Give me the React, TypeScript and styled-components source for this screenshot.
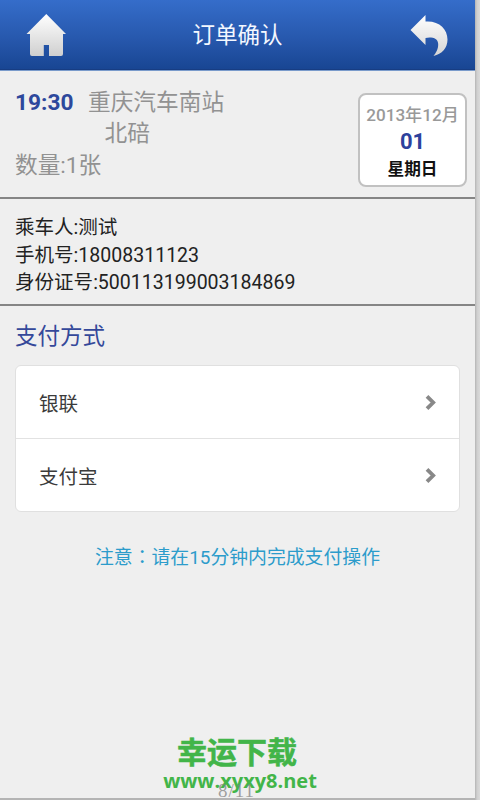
import React from "react";
import styled, { createGlobalStyle } from "styled-components";

const GlobalStyle = createGlobalStyle`
  * { box-sizing: border-box; }
  body { margin: 0; background: #d2d2d2; overflow: hidden; }
`;

const Backdrop = styled.div`
  position: relative;
  width: 480px;
  height: 800px;
  overflow: hidden;
  background: linear-gradient(90deg, #b4b4b4 475px, #cfcfcf 477px, #dadada 480px);
  font-family: Roboto, "Noto Sans CJK SC", sans-serif;
`;

const Screen = styled.main`
  width: 475px;
  height: 798px;
  display: flex;
  flex-direction: column;
  background: #efefef;
`;

const Header = styled.header`
  height: 71px;
  flex: none;
  display: grid;
  grid-template-columns: 93px 1fr 93px;
  align-items: center;
  background: linear-gradient(#356dca, #2758ad 55%, #184592);
  border-bottom: 1px solid #7a9bcb;
  box-shadow: inset 0 -1px #173d83;
`;

const Title = styled.h1`
  margin: 0;
  text-align: center;
  color: #f4f8ff;
  font-size: 22.5px;
  font-weight: 400;
  line-height: 70px;
`;

const IconButton = styled.button`
  border: 0;
  padding: 0;
  height: 70px;
  background: none;
  svg { display: block; }
`;

const Trip = styled.section`
  height: 128px;
  flex: none;
  display: flex;
  justify-content: space-between;
  padding: 16px 8px 0 15px;
  border-bottom: 2px solid #858585;
`;

const TripLine = styled.div<{ $indent?: number }>`
  display: flex;
  height: 31.3px;
  line-height: 32px;
  padding-left: ${(p) => p.$indent ?? 0}px;
  color: #929292;
  font-size: 22.7px;
  white-space: nowrap;
`;

const Time = styled.strong`
  width: 73px;
  color: #2d489c;
  font-size: 22.7px;
`;

const DateCard = styled.div`
  width: 109px;
  height: 94px;
  margin-top: 6px;
  padding-top: 8px;
  display: flex;
  flex-direction: column;
  align-items: center;
  border: 2px solid #c1c1c1;
  border-radius: 8px;
  background: #fff;
  font-weight: 700;
  white-space: nowrap;
`;

const Month = styled.span`
  color: #999;
  font-size: 17.1px;
  font-weight: 500;
  line-height: 24px;
`;

const Day = styled.span`
  color: #2d429c;
  font-size: 22px;
  line-height: 30px;
`;

const Weekday = styled.span`
  color: #111;
  font-size: 16.7px;
  line-height: 25px;
`;

const Passenger = styled.section`
  height: 107px;
  flex: none;
  padding: 15px 15px 0;
  border-bottom: 2px solid #858585;
  color: #222;
  font-size: 19.55px;
  line-height: 27.5px;
`;

const Payment = styled.section`
  padding: 14px 15px 0;
`;

const SectionTitle = styled.h2`
  margin: 0 0 12px;
  color: #34489a;
  font-size: 22.5px;
  font-weight: 400;
  line-height: 33px;
`;

const Options = styled.div`
  height: 147px;
  border: 1.5px solid #e0e0e0;
  border-radius: 6px;
  background: #fff;
`;

const Option = styled.div`
  height: 72px;
  display: flex;
  align-items: center;
  justify-content: space-between;
  padding: 0 22px 0 23px;
  color: #3b3b3b;
  font-size: 19.5px;
  & + & {
    height: 73px;
    border-top: 1.5px solid #e2e2e2;
  }
`;

const Note = styled.p`
  margin: 30px 0 0 80px;
  color: #2c9ccb;
  font-size: 18.85px;
  line-height: 28px;
  white-space: nowrap;
`;

const CenteredColon = styled.span`
  font-family: "Noto Sans CJK TC", sans-serif;
`;

const Watermark = styled.div`
  position: absolute;
  left: 140px;
  top: 732px;
  width: 200px;
  text-align: center;
  color: #42b549;
  font-weight: 700;
  white-space: nowrap;
`;

const SiteName = styled.div`
  font: 700 30px/36px "Noto Sans CJK SC", sans-serif;
  -webkit-text-stroke: 0.5px #42b549;
  padding-right: 6px;
`;

const SiteUrl = styled.div`
  font: 700 20px/26px "Open Sans", sans-serif;
`;

const PageNumber = styled.div`
  position: absolute;
  left: 218px;
  top: 781px;
  color: rgba(130, 130, 130, 0.75);
  font: 19px/19px "Liberation Serif", serif;
  letter-spacing: 1px;
`;

const HomeIcon = () => (
  <svg width="93" height="70" viewBox="0 0 93 70">
    <defs>
      <linearGradient id="homeFill" x2="0" y2="1">
        <stop stopColor="#fff" />
        <stop offset="1" stopColor="#cfcfcf" />
      </linearGradient>
    </defs>
    <path
      d="M46.3 14 66 34H63V54Q63 56 61 56H49V45H43.8V56H32Q30 56 30 54V34H26.5Z"
      fill="url(#homeFill)"
    />
  </svg>
);

const BackIcon = () => (
  <svg width="93" height="70" viewBox="382 0 93 70">
    <defs>
      <linearGradient id="backFill" x2="0" y2="1">
        <stop stopColor="#fff" />
        <stop offset="1" stopColor="#d4d4d4" />
      </linearGradient>
    </defs>
    <path
      d="M410.5 30 425.5 15V21.5C439 20.5 447.5 29 447.5 39.5C447.5 48 442 54 433.5 56C439 50 441.5 38 431 37.5Q428 37.3 425.5 38V45Z"
      fill="url(#backFill)"
    />
  </svg>
);

const Chevron = () => (
  <svg width="12" height="18" viewBox="0 0 12 18">
    <path d="M2 3.3 8.2 9.5 2 15.7" fill="none" stroke="#888" strokeWidth="3.8" />
  </svg>
);

export default function App() {
  return (
    <Backdrop>
      <GlobalStyle />
      <Screen>
        <Header>
          <IconButton aria-label="首页"><HomeIcon /></IconButton>
          <Title>订单确认</Title>
          <IconButton aria-label="返回"><BackIcon /></IconButton>
        </Header>
        <Trip>
          <div>
            <TripLine><Time>19:30</Time>重庆汽车南站</TripLine>
            <TripLine $indent={89.5}>北碚</TripLine>
            <TripLine>数量:1张</TripLine>
          </div>
          <DateCard>
            <Month>2013年12月</Month>
            <Day>01</Day>
            <Weekday>星期日</Weekday>
          </DateCard>
        </Trip>
        <Passenger>
          <div>乘车人:测试</div>
          <div>手机号:18008311123</div>
          <div>身份证号:500113199003184869</div>
        </Passenger>
        <Payment>
          <SectionTitle>支付方式</SectionTitle>
          <Options>
            <Option>银联<Chevron /></Option>
            <Option>支付宝<Chevron /></Option>
          </Options>
          <Note>注意<CenteredColon lang="zh-Hant">：</CenteredColon>请在15分钟内完成支付操作</Note>
        </Payment>
      </Screen>
      <Watermark>
        <SiteName>幸运下载</SiteName>
        <SiteUrl>www.xyxy8.net</SiteUrl>
      </Watermark>
      <PageNumber>8/11</PageNumber>
    </Backdrop>
  );
}
